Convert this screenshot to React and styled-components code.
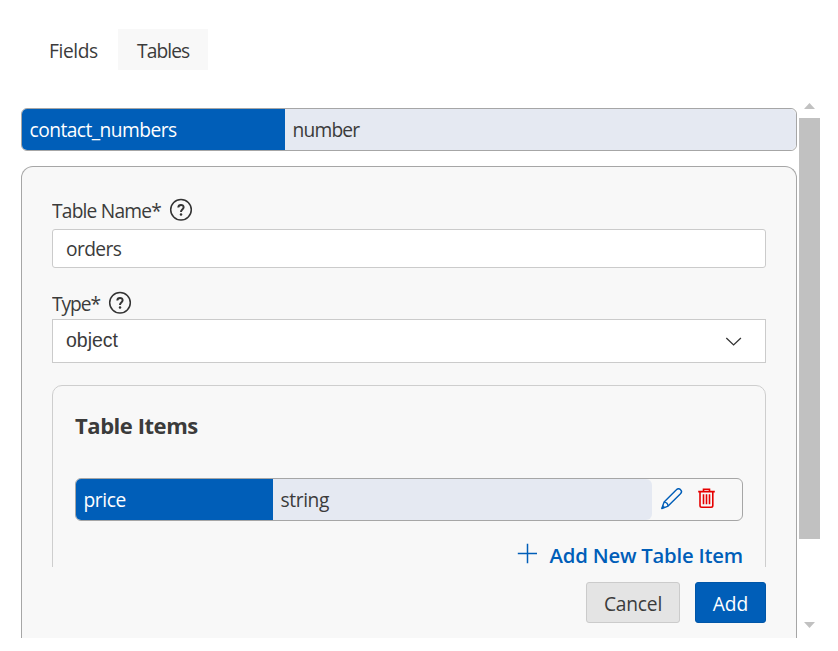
import React from "react";
import styled, { createGlobalStyle } from "styled-components";

const blue = "#005eb8";
const surface = "#f8f8f8";

const GlobalStyle = createGlobalStyle`
  *, *::before, *::after { box-sizing: border-box; }
  body {
    margin: 0;
    background: #fff;
    color: #3b3b3b;
    font-family: "Open Sans", "Noto Sans", sans-serif;
    font-size: 19.2px;
    line-height: 26px;
  }
  button, input { font: inherit; color: inherit; margin: 0; }
`;

const Page = styled.div`
  display: flex;
  flex-direction: column;
  width: 838px;
  height: 651px;
  overflow: hidden;
`;

const TabBar = styled.nav`
  display: flex;
  padding: 29px 0 0 30px;
  height: 97px;
`;

const Tab = styled.button`
  width: ${(p) => (p.$active ? 90 : 88)}px;
  height: 41px;
  padding: 3px 0 0 19px;
  border: 0;
  text-align: left;
  background: ${(p) => (p.$active ? surface : "transparent")};
  letter-spacing: ${(p) => p.$track}px;
`;

const Body = styled.div`
  display: flex;
  height: 541px;
`;

const Content = styled.main`
  width: 799px;
  padding: 11px 2px 0 21px;
  display: flex;
  flex-direction: column;
  gap: 15px;
  overflow: hidden;
`;

const Row = styled.div`
  display: flex;
  flex: none;
  height: 43px;
  border: 1px solid #a6a6a6;
  border-radius: 6px;
  overflow: hidden;
`;

const KeyCell = styled.div`
  width: ${(p) => p.$width}px;
  padding: 8px 0 0 7.5px;
  color: #fff;
  background: ${blue};
  letter-spacing: ${(p) => p.$track}px;
`;

const TypeCell = styled.div`
  flex: 1;
  padding: 8px 0 0 7.5px;
  border-radius: 0 6px 6px 0;
  background: #e5e9f2;
  letter-spacing: ${(p) => p.$track}px;
`;

const RowActions = styled.div`
  display: flex;
  gap: 11px;
  width: 90px;
  padding: 7px 0 0 7.5px;
`;

const IconButton = styled.button`
  display: block;
  width: 25px;
  height: 26px;
  padding: 0;
  border: 0;
  background: none;
  color: ${(p) => (p.$danger ? "#e60000" : blue)};
  svg { display: block; }
`;

const Card = styled.section`
  display: flex;
  flex-direction: column;
  flex: 1;
  min-height: 0;
  border: 1px solid #a6a6a6;
  border-bottom: 0;
  border-radius: 12px 12px 0 0;
  background: ${surface};
  padding: 0 30px;
`;

const CardScroll = styled.div`
  height: 400px;
  padding-top: 31px;
  overflow: hidden;
`;

const Field = styled.div`
  height: ${(p) => p.$height}px;
`;

const FieldLabel = styled.label`
  display: flex;
  gap: 8px;
  height: ${(p) => p.$height}px;
  letter-spacing: ${(p) => p.$track}px;
  svg { flex: none; }
`;

const TextInput = styled.input`
  display: block;
  width: 100%;
  height: 39px;
  padding: 0 13px 1px;
  border: 1px solid #cbcbcb;
  border-radius: 3px;
  outline: 0;
  background: #fff;
  letter-spacing: -0.6px;
`;

const Select = styled.div`
  display: flex;
  justify-content: space-between;
  height: 44px;
  padding: 8px 23px 0 13px;
  border: 1px solid #cbcbcb;
  background: #fff;
  font-family: "Liberation Sans", Arial, sans-serif;
  font-size: 19.5px;
  line-height: 24px;
`;

const ItemsPanel = styled.section`
  height: 260px;
  padding: 0 22px;
  border: 1px solid #cecece;
  border-radius: 10px;
`;

const PanelTitle = styled.h2`
  height: 92px;
  margin: 0;
  padding-top: 25px;
  font-size: 22px;
  line-height: 28px;
  font-weight: 700;
  letter-spacing: -0.45px;
`;

const AddItem = styled.button`
  display: flex;
  align-items: flex-start;
  gap: 11.5px;
  margin: 22px 0 0 auto;
  padding: 0;
  border: 0;
  background: none;
  color: ${blue};
  font-size: 20.3px;
  line-height: 24px;
  font-weight: 600;
  letter-spacing: -0.2px;
  white-space: nowrap;
`;

const Footer = styled.footer`
  display: flex;
  justify-content: flex-end;
  gap: 15px;
  padding-top: 15px;
`;

const Button = styled.button`
  width: ${(p) => (p.$primary ? 71 : 94)}px;
  height: 41px;
  padding: 2px 0 0;
  border: 1px solid ${(p) => (p.$primary ? "#0056a8" : "#cbcbcb")};
  border-radius: 3px;
  color: ${(p) => (p.$primary ? "#fff" : "inherit")};
  background: ${(p) => (p.$primary ? blue : "#e4e4e4")};
  letter-spacing: ${(p) => p.$track}px;
`;

const ScrollBar = styled.div`
  width: 21px;
  display: flex;
  flex-direction: column;
  align-items: center;
  svg { display: block; flex: none; }
`;

const Thumb = styled.div`
  width: 21px;
  height: 421px;
  background: #c1c1c1;
  flex: none;
`;

const HelpIcon = () => (
  <svg width="24" height="24" viewBox="0 0 24 24" fill="none" stroke="#333" strokeWidth="1.5">
    <circle cx="12" cy="11.8" r="10.3" />
    <path d="M9.3 9.5C9.5 6 14.8 6.3 14.6 9.4C14.4 11.5 12 11.5 12 13.9" strokeWidth="2" />
    <circle cx="12" cy="16.6" r="1.25" fill="#333" stroke="none" />
  </svg>
);

const PencilIcon = () => (
  <svg width="25" height="26" viewBox="0 0 25 26" fill="none" stroke="currentColor" strokeWidth="1.4" strokeLinejoin="round">
    <path d="M1.8 22.6L4.1 16.1L16.4 3.8C17.6 2.5 19.5 2.5 20.6 3.7C21.8 4.9 21.7 6.6 20.5 7.8L8.1 20.1Z" />
    <path d="M4.1 16.1C6.4 16.3 7.9 17.8 8.1 20.1" />
    <path d="M1.8 22.6L3 19.4L5 21.4Z" fill="currentColor" strokeWidth="0.5" />
  </svg>
);

const TrashIcon = () => (
  <svg width="25" height="26" viewBox="0 0 25 26" fill="none" stroke="currentColor" strokeWidth="1.6">
    <path d="M2.2 5.6H18.8M4 5.6V19.5Q4 21.2 5.7 21.2H15.1Q16.8 21.2 16.8 19.5V5.6" />
    <path d="M7.5 5.4V3.2H13.5V5.4M7.5 8.2V18.3M10.5 8.2V18.3M13.5 8.2V18.3" />
  </svg>
);

const PlusIcon = () => (
  <svg width="21" height="22" viewBox="0 0 21 22" fill="none" stroke="currentColor" strokeWidth="1.5">
    <path d="M0.8 10.5H20M10.5 0.8V20.2" />
  </svg>
);

const ChevronIcon = () => (
  <svg width="18" height="24" viewBox="0 0 18 24" fill="none" stroke="#333" strokeWidth="1.3">
    <path d="M2.3 10L9.6 16.9L16.9 10" />
  </svg>
);

const Arrow = ({ down }) => (
  <svg width="21" height={down ? 96 : 21} viewBox={down ? "0 0 21 96" : "0 0 21 21"} fill="#c1c1c1">
    <path d={down ? "M5 83H16L10.5 89Z" : "M5 12H16L10.5 6Z"} />
  </svg>
);

export default function App() {
  return (
    <>
      <GlobalStyle />
      <Page>
        <TabBar>
          <Tab $track={-0.4}>Fields</Tab>
          <Tab $active $track={-0.9}>Tables</Tab>
        </TabBar>
        <Body>
          <Content>
            <Row>
              <KeyCell $width={263} $track={-0.54}>contact_numbers</KeyCell>
              <TypeCell $track={-0.8}>number</TypeCell>
            </Row>
            <Card>
              <CardScroll>
                <Field $height={93}>
                  <FieldLabel $height={31} $track={-0.8}>
                    Table Name* <HelpIcon />
                  </FieldLabel>
                  <TextInput defaultValue="orders" />
                </Field>
                <Field $height={94}>
                  <FieldLabel $height={28} $track={-1.05}>
                    Type* <HelpIcon />
                  </FieldLabel>
                  <Select>
                    object <ChevronIcon />
                  </Select>
                </Field>
                <ItemsPanel>
                  <PanelTitle>Table Items</PanelTitle>
                  <Row>
                    <KeyCell $width={197} $track={-0.4}>price</KeyCell>
                    <TypeCell $track={-0.4}>string</TypeCell>
                    <RowActions>
                      <IconButton aria-label="Edit"><PencilIcon /></IconButton>
                      <IconButton aria-label="Delete" $danger><TrashIcon /></IconButton>
                    </RowActions>
                  </Row>
                  <AddItem>
                    <PlusIcon /> Add New Table Item
                  </AddItem>
                </ItemsPanel>
              </CardScroll>
              <Footer>
                <Button $track={-0.2}>Cancel</Button>
                <Button $primary $track={0}>Add</Button>
              </Footer>
            </Card>
          </Content>
          <ScrollBar>
            <Arrow />
            <Thumb />
            <Arrow down />
          </ScrollBar>
        </Body>
      </Page>
    </>
  );
}
